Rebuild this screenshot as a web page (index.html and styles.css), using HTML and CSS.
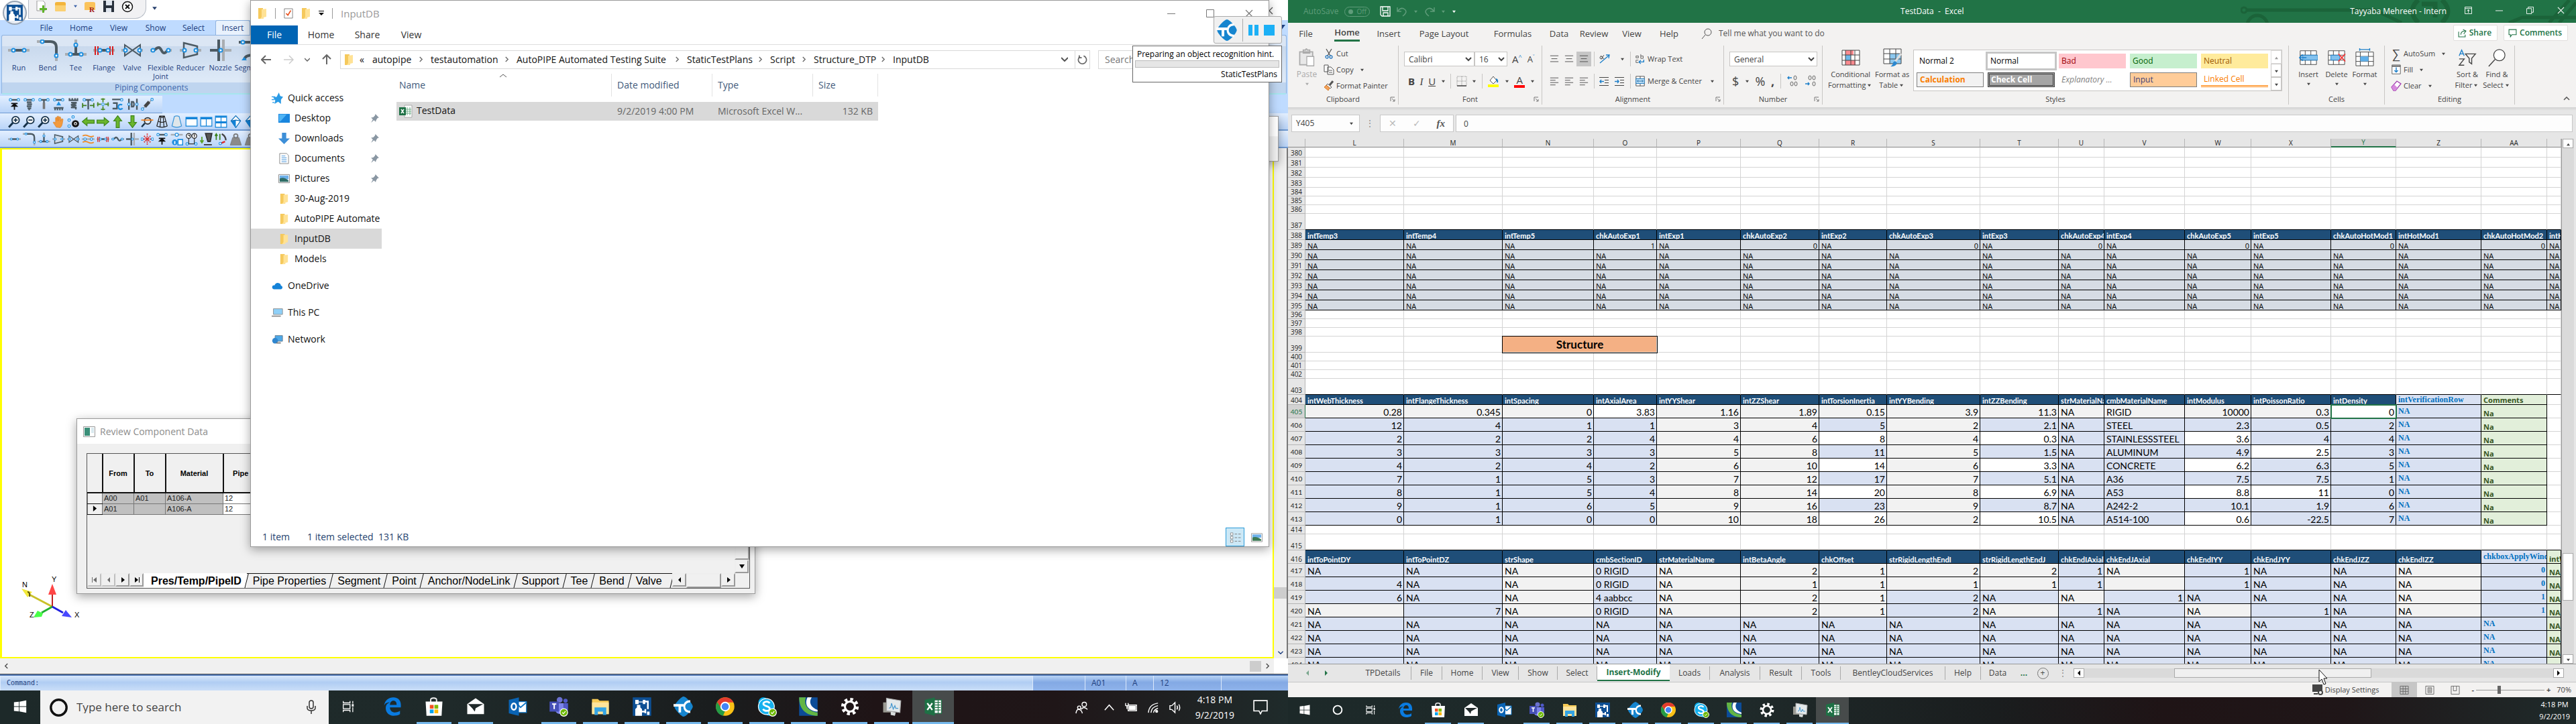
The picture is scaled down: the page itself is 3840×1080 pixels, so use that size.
FILE: index.html
```html
<!DOCTYPE html>
<html lang="en">
<head>
<meta charset="utf-8">
<title>Desktop</title>
<link rel="stylesheet" href="styles.css">
</head>
<body>
<svg class="defs" aria-hidden="true">
  <!-- general -->
  <symbol id="folder" viewBox="0 0 14 18"><path d="M1 1h7v16H1z" fill="#f5c95c"/><path d="M6 3l7-1v12l-4 1v2H4l2-3z" fill="#ffe295"/></symbol>
  <symbol id="down" viewBox="0 0 8 6"><path d="M1 1h6L4 5z" fill="currentColor"/></symbol>
  <symbol id="chev" viewBox="0 0 8 10"><path d="M2 1l4 4-4 4" fill="none" stroke="currentColor" stroke-width="1.5"/></symbol>
  <symbol id="pin" viewBox="0 0 14 14"><path d="M8 1l5 5-2 .5-2 3-.5 2.500L6 9.500 2 13l2.500-4.500L2 6l3-.5L7.500 3z" fill="#8a97a3"/></symbol>
  <symbol id="launch" viewBox="0 0 8 8"><path d="M1 7V1h6M3 3l4 4M7 4v3H4" fill="none" stroke="#777"/></symbol>
  <symbol id="min" viewBox="0 0 12 12"><path d="M0 6.500h12" stroke="currentColor" fill="none"/></symbol>
  <symbol id="max" viewBox="0 0 12 12"><path d="M.5.5h11v11H.5z" stroke="currentColor" fill="none"/></symbol>
  <symbol id="close" viewBox="0 0 12 12"><path d="M1 1l10 10M11 1L1 11" stroke="currentColor" fill="none" stroke-width="1.200"/></symbol>
  <!-- task bar -->
  <symbol id="t-start" viewBox="0 0 24 24"><path d="M2 5l8-1v7.500H2zM11 4l11-2v9.500H11zM2 12.500h8V20l-8-1zM11 12.500h11V22l-11-2z" fill="#fff"/></symbol>
  <symbol id="t-cortana" viewBox="0 0 24 24"><circle cx="12" cy="12" r="8.500" fill="none" stroke="currentColor" stroke-width="2.500"/></symbol>
  <symbol id="t-view" viewBox="0 0 24 24"><path d="M4 3v3h11V3M4 21v-3h11v3M4 8.500h11v7H4zM19.500 3v4M19.500 13v8" fill="none" stroke="#fff" stroke-width="1.400"/><path d="M18 8h3v4h-3z" fill="#fff"/></symbol>
  <symbol id="t-edge" viewBox="0 0 24 24"><path d="M2 11C3 4 8 1 13 1c6 0 10 4 9 12H9c0 4 3 6 6 6 2 0 5-1 6-2v4c-2 1.500-5 2-8 2-5 0-9-4-9-9 0-4 2-6 5-7-5 0-6 2-7 4zm7-1h8c0-3-1-5-4-5-2 0-4 2-4 5z" fill="#0a7be0"/></symbol>
  <symbol id="t-store" viewBox="0 0 24 24"><path d="M8 7V4c0-3 7-3 7 0v3" fill="none" stroke="#eee" stroke-width="1.500"/><path d="M2 6h20l-1 17H3z" fill="#fff"/><path d="M7 10h4.500v4.500H7z" fill="#f25022"/><path d="M12.500 10H17v4.500h-4.500z" fill="#7fba00"/><path d="M7 15.500h4.500V20H7z" fill="#00a4ef"/><path d="M12.500 15.500H17V20h-4.500z" fill="#ffb900"/></symbol>
  <symbol id="t-mail" viewBox="0 0 24 24"><path d="M2 9l10-7 10 7v12H2z" fill="#fff"/><path d="M3 9h18l-9 5-1 4-3-4z" fill="#20292a"/></symbol>
  <symbol id="t-outlook" viewBox="0 0 24 24"><path d="M11 6h12v13H11z" fill="#fff" stroke="#1177c8"/><path d="M11 8l5 5 7-6" fill="none" stroke="#1177c8" stroke-width="1.500"/><path d="M2 4l12-3v22L2 20z" fill="#0a64b4"/><ellipse cx="8" cy="12" rx="2.800" ry="3.800" fill="none" stroke="#fff" stroke-width="2"/></symbol>
  <symbol id="t-teams" viewBox="0 0 24 24"><circle cx="13" cy="4" r="3.500" fill="#6a70cf"/><circle cx="20" cy="5" r="2.500" fill="#5059c9"/><path d="M8 8h10v9c0 5-9 5-10 0z" fill="#7b83eb"/><path d="M18 8h5v7c0 4-5 4-5 0z" fill="#5059c9"/><path d="M1 6h11v12H1z" fill="#4650b8"/><path d="M4 9h5M6.500 9v6" stroke="#fff" stroke-width="1.600"/><circle cx="18" cy="19" r="4.500" fill="#6bb700" stroke="#fff"/><path d="M16 19l1.500 1.500 2.500-3" fill="none" stroke="#fff"/></symbol>
  <symbol id="t-explorer" viewBox="0 0 24 24"><path d="M2 3h7l2 2h11v16H2z" fill="#f7ca55"/><path d="M2 7h20v14H2z" fill="#ffe49b"/><path d="M5 13h14v9h-4v-4H9v4H5z" fill="#35a4e4"/></symbol>
  <symbol id="t-pipe" viewBox="0 0 24 24"><path d="M1 1h22v22H1z" fill="#0d4f94"/><path d="M4 4h4v2h5V4h3v5h-3V7H8v2H4zM16 5h4v10h-2V7h-2zM6 10h4v3l2 2v8H4v-8l2-2zM12 17h3v-2h2v5h-2v-1h-3zM18 18h3v4h-3z" fill="#fff"/></symbol>
  <symbol id="t-tc" viewBox="0 0 24 24"><path d="M12 0c3 0 11 9 11 12S15 24 12 24 1 15 1 12 9 0 12 0z" fill="#1685cf"/><path d="M0 9h12v3H9v7H6v-7H0zM20 7c-8 0-8 10 0 10v2.500C9 20 9 4 20 4.500z" fill="#fff"/></symbol>
  <symbol id="t-chrome" viewBox="0 0 24 24"><circle cx="12" cy="12" r="11" fill="#fbc116"/><path d="M12 1a11 11 0 0 1 10 6H12L7 14 2.500 6.500A11 11 0 0 1 12 1z" fill="#e33b2e"/><path d="M2.500 6.500L8 15l4 2-2.500 6A11 11 0 0 1 2.500 6.500z" fill="#259b46"/><circle cx="12" cy="12" r="5" fill="#4285f4" stroke="#fff" stroke-width="1.500"/></symbol>
  <symbol id="t-skype" viewBox="0 0 24 24"><circle cx="8" cy="7" r="6" fill="#00aff0"/><circle cx="15" cy="17" r="6" fill="#00aff0"/><circle cx="11.500" cy="12" r="9.500" fill="#16b1ef" stroke="#fff" stroke-width="1"/><path d="M15.500 8c-2-3-8-2-7.500 1s7.500 2 7.500 5.500-6 3.500-8 .5" fill="none" stroke="#fff" stroke-width="2.200"/><circle cx="19" cy="19" r="4.500" fill="#6bb700" stroke="#fff"/><path d="M17 19l1.500 1.500 2.500-3" fill="none" stroke="#fff"/></symbol>
  <symbol id="t-swirl" viewBox="0 0 24 24"><path d="M1 1h22v22H1z" fill="#0c4c98"/><path d="M1 1h8c-3 8 2 17 14 18v4C10 23 1 16 1 1z" fill="#63b544"/><path d="M11 1h5c-4 6-1 12 7 15v2C11 17 7 9 11 1z" fill="#fff"/></symbol>
  <symbol id="t-gear" viewBox="0 0 24 24"><circle cx="12" cy="12" r="8.500" fill="none" stroke="#fff" stroke-width="4" stroke-dasharray="3.340 3.340"/><circle cx="12" cy="12" r="6" fill="none" stroke="#fff" stroke-width="2.500"/></symbol>
  <symbol id="t-monitor" viewBox="0 0 24 24"><path d="M2 7h9v12H2z" fill="#9a9a92"/><path d="M6 2l17 3-1 14-16-2z" fill="#e3e8ea" stroke="#aaa"/><path d="M9 14l2-1 1-5 2 7 2-4 1 3h3" fill="none" stroke="#4a9ad0"/><path d="M11 18l6 1-1 4-5-1z" fill="#d8dcdc"/></symbol>
  <symbol id="t-excel" viewBox="0 0 24 24"><path d="M13 4h9v16h-9z" fill="#fff" stroke="#1e7145"/><path d="M14 7h7M14 10h7M14 13h7M14 16h7M18 4v16" stroke="#1e7145"/><path d="M2 4l12-3v22L2 20z" fill="#1e7145"/><path d="M5 8l6 8M11 8l-6 8" stroke="#fff" stroke-width="1.800"/></symbol>
  <!-- pipe tools -->
  <symbol id="p-run" viewBox="0 0 32 32"><path class="q" d="M0 16h32"/><path class="k" d="M8 16h16"/><circle class="n" cx="8" cy="16" r="2.500"/><circle class="n" cx="24" cy="16" r="2.500"/></symbol>
  <symbol id="p-bend" viewBox="0 0 32 32"><path class="q" d="M0 3h8M29 24v8"/><path class="k" d="M8 3h12q9 0 9 9v12"/><circle class="n" cx="8" cy="3" r="2.500"/><circle class="n" cx="29" cy="24" r="2.500"/></symbol>
  <symbol id="p-tee" viewBox="0 0 32 32"><path class="q" d="M0 22h32M16 0v10"/><path class="k" d="M8 22h16M16 8v14"/><circle class="n" cx="8" cy="22" r="2.500"/><circle class="n" cx="24" cy="22" r="2.500"/><circle class="n" cx="16" cy="8" r="2.500"/></symbol>
  <symbol id="p-flange" viewBox="0 0 32 32"><path class="q" d="M0 16h32"/><path class="k" d="M10 16h13"/><path d="M3 10v13M7 10v13M25 10v13M29 10v13" stroke="#d81e1e" stroke-width="2"/><circle class="n" cx="10" cy="16" r="2.500"/><circle class="n" cx="22" cy="16" r="2.500"/></symbol>
  <symbol id="p-valve" viewBox="0 0 32 32"><path class="q" d="M0 16h4M28 16h4"/><path d="M5 8l23 16V8L5 24z" fill="none" stroke="#4c5a63" stroke-width="2"/><circle class="n" cx="6" cy="16" r="2.500"/><circle class="n" cx="27" cy="16" r="2.500"/></symbol>
  <symbol id="p-flex" viewBox="0 0 32 32"><path class="q" d="M0 16h4M28 16h4"/><path class="k" d="M4 16c6-1 5-5 9-4s4 9 8 8 3-4 6-4"/><circle class="n" cx="4" cy="16" r="2.500"/><circle class="n" cx="27" cy="16" r="2.500"/></symbol>
  <symbol id="p-red" viewBox="0 0 32 32"><path class="q" d="M0 16h32"/><path d="M6 5l20 5v12L6 27z" fill="#cfdcec" stroke="#4c5a63" stroke-width="2.500"/><circle class="n" cx="7" cy="16" r="2.500"/><circle class="n" cx="24" cy="16" r="2.500"/></symbol>
  <symbol id="p-noz" viewBox="0 0 32 32"><path class="q" d="M16 16h16M20 0v32"/><path class="k" d="M0 16h14M13 0v32"/><circle class="n" cx="16" cy="16" r="2.500"/></symbol>
  <symbol id="p-seg" viewBox="0 0 32 32"><path class="k" d="M0 4h32M8 31q0-8 14-8"/><circle class="n" cx="6" cy="4" r="2.500"/><path d="M4 31l4-5 4 5z" fill="#1e8fe0"/></symbol>
  <symbol id="p-anchor" viewBox="0 0 32 32"><path class="k" d="M4 5h24"/><circle class="n" cx="6" cy="5" r="3"/><circle class="n" cx="26" cy="5" r="3"/><path d="M8 14h16M16 30V16M10 21l6-6 6 6z" stroke="#111" stroke-width="3"/></symbol>
  <symbol id="p-spring" viewBox="0 0 32 32"><path class="k" d="M4 5h24M10 11h12M11 16h12M10 21h12M12 26h9M16 26v5"/><circle class="n" cx="6" cy="5" r="3"/><circle class="n" cx="26" cy="5" r="3"/></symbol>
  <symbol id="p-rod" viewBox="0 0 32 32"><path class="k" d="M4 5h24M16 6v18"/><path d="M13 12h6v16h-6z" fill="#777"/><circle class="n" cx="6" cy="5" r="3"/><circle class="n" cx="26" cy="5" r="3"/></symbol>
  <symbol id="p-stop" viewBox="0 0 32 32"><path class="k" d="M4 5h24M4 25h24M7 25v6M13 25v6M19 25v6M25 25v6"/><path d="M10 19l6-10 6 10z" fill="#1e8fe0"/><circle class="n" cx="6" cy="5" r="3"/><circle class="n" cx="26" cy="5" r="3"/></symbol>
  <symbol id="p-coil" viewBox="0 0 32 32"><path class="k" d="M4 6h24M6 6V1M13 6V1M20 6V1M26 6V1M10 12h14l-14 6h13l-13 6h12v5"/></symbol>
  <symbol id="p-guide" viewBox="0 0 32 32"><path class="k" d="M4 5h24M16 5v24"/><path d="M2 19h10M20 19h10M2 13v12M30 13v12" stroke="#3f7f1f" stroke-width="3"/><circle class="n" cx="6" cy="5" r="3"/><circle class="n" cx="26" cy="5" r="3"/></symbol>
  <symbol id="p-cross" viewBox="0 0 32 32"><path d="M1 16h10M21 16h10M16 1v10M16 21v10M3 11v10M29 11v10M11 3h10M11 29h10" stroke="#4d8a28" stroke-width="3"/><circle class="n" cx="16" cy="16" r="3"/></symbol>
  <symbol id="p-rot" viewBox="0 0 32 32"><path class="k" d="M2 4h26M4 13h10v14H3"/><path d="M27 18a6 6 0 1 0 1 8" fill="none" stroke="#1e8fe0" stroke-width="4"/><circle class="n" cx="26" cy="5" r="3"/></symbol>
  <symbol id="p-damp" viewBox="0 0 32 32"><path class="k" d="M7 2v28M27 2v28M14 10v12h4q4-6 0-12z"/><circle class="n" cx="7" cy="16" r="3"/><circle class="n" cx="27" cy="16" r="3"/></symbol>
  <symbol id="p-link" viewBox="0 0 32 32"><path d="M4 28L28 4" stroke="#888" stroke-width="2"/><path d="M10 22l11-12" stroke="#444" stroke-width="8"/><circle class="n" cx="4" cy="28" r="3"/><circle class="n" cx="28" cy="4" r="3"/></symbol>
  <symbol id="p-zoom" viewBox="0 0 32 32"><path d="M2 30l10-11" stroke="#16324a" stroke-width="5"/><circle cx="19" cy="12" r="9" fill="#fff" stroke="#16324a" stroke-width="3"/><path d="M14 12h10M19 7v10" stroke="#16324a" stroke-width="3"/></symbol>
  <symbol id="p-zoomout" viewBox="0 0 32 32"><path d="M2 30l10-11" stroke="#16324a" stroke-width="5"/><circle cx="19" cy="12" r="9" fill="#fff" stroke="#16324a" stroke-width="3"/><path d="M14 12h10" stroke="#16324a" stroke-width="3"/></symbol>
  <symbol id="p-hand" viewBox="0 0 32 32"><path d="M10 30L2 18q2-3 6 1V6q3-2 4 0v8V3q3-2 4 0v11l1-10q3-1 4 1v10l2-6q3-1 4 1l-2 12q-1 6-5 9z" fill="#f29a3e" stroke="#d9791c"/></symbol>
  <symbol id="p-eye" viewBox="0 0 32 32"><circle class="n" cx="5" cy="12" r="3"/><circle class="n" cx="15" cy="4" r="3"/><circle class="n" cx="5" cy="27" r="3"/><circle cx="21" cy="21" r="9" fill="#111"/><circle cx="21" cy="21" r="3" fill="none" stroke="#fff" stroke-width="2"/></symbol>
  <symbol id="p-left" viewBox="0 0 32 32"><path d="M1 16L13 6v6h18v8H13v6z" fill="#6ab52d" stroke="#3f861a" stroke-width="2"/></symbol>
  <symbol id="p-right" viewBox="0 0 32 32"><path d="M31 16L19 6v6H1v8h18v6z" fill="#6ab52d" stroke="#3f861a" stroke-width="2"/></symbol>
  <symbol id="p-up" viewBox="0 0 32 32"><path d="M16 1L6 14h6v17h8V14h6z" fill="#6ab52d" stroke="#3f861a" stroke-width="2"/></symbol>
  <symbol id="p-dn" viewBox="0 0 32 32"><path d="M16 31L6 18h6V1h8v17h6z" fill="#6ab52d" stroke="#3f861a" stroke-width="2"/></symbol>
  <symbol id="p-find" viewBox="0 0 32 32"><path d="M2 29l8-9" stroke="#16324a" stroke-width="4"/><circle cx="17" cy="14" r="8" fill="#dce9f8" stroke="#333" stroke-width="3"/><path d="M1 12h30" stroke="#f08020" stroke-width="3"/></symbol>
  <symbol id="p-wire" viewBox="0 0 32 32"><path d="M10 2h12l7 25q-13 6-26 0zM10 3q6 4 12 0M7 15q9 5 18 0M13 4l-2 25M19 4l2 25" fill="none" stroke="#222" stroke-width="2"/></symbol>
  <symbol id="p-cone" viewBox="0 0 32 32"><path d="M10 3q6-3 12 0l6 24q-12 6-24 0z" fill="#dfe6ea" stroke="#3c95d8" stroke-width="2"/></symbol>
  <symbol id="p-win1" viewBox="0 0 32 32"><path d="M2 5h28v22H2z" fill="#fff" stroke="#0f82d8" stroke-width="2"/><path d="M2 5h28v5H2z" fill="#0f82d8"/></symbol>
  <symbol id="p-win2" viewBox="0 0 32 32"><path d="M2 5h28v22H2zM16 5v22" fill="#fff" stroke="#0f82d8" stroke-width="2"/><path d="M2 5h28v5H2z" fill="#0f82d8"/></symbol>
  <symbol id="p-win4" viewBox="0 0 32 32"><path d="M2 2h28v28H2zM16 2v28M2 16h28" fill="#fff" stroke="#0f82d8" stroke-width="2"/><path d="M2 2h28v4H2zM2 16h28v4H2z" fill="#0f82d8"/></symbol>
  <symbol id="p-cube" viewBox="0 0 32 32"><path d="M16 1l12 13-12 17L4 14z" fill="#fff" stroke="#0f6fb8" stroke-width="2"/><path d="M16 12v19L4 14z" fill="#0f82d8"/><path d="M4 14l12-2 12 2" fill="none" stroke="#0f6fb8" stroke-width="2"/></symbol>
  <symbol id="p-bellow" viewBox="0 0 32 32"><path class="q" d="M0 16h32"/><path d="M2 8q7-4 14 0t14 0M2 24q7-4 14 0t14 0" fill="none" stroke="#f08a24" stroke-width="3"/><circle class="n" cx="8" cy="16" r="3"/><circle class="n" cx="24" cy="16" r="3"/></symbol>
  <symbol id="p-star" viewBox="0 0 32 32"><path d="M8 8l16 16M24 8L8 24M16 2v28M2 16h28" stroke="#dc2a2a" stroke-width="3" stroke-dasharray="3 2"/><circle class="n" cx="3" cy="16" r="3"/><circle class="n" cx="29" cy="16" r="3"/></symbol>
  <symbol id="p-info" viewBox="0 0 32 32"><path class="q" d="M1 5h30"/><circle class="n" cx="16" cy="5" r="4"/><circle cx="11" cy="24" r="7" fill="#1e8fe0"/><path d="M19 17h12v14H19z" fill="#fff" stroke="#1e8fe0" stroke-width="3"/><path d="M11 21v7M21 24h8" stroke="#fff" stroke-width="3"/></symbol>
  <symbol id="p-pt" viewBox="0 0 32 32"><circle cx="9" cy="8" r="6" fill="#fff" stroke="#222" stroke-width="2"/><circle cx="23" cy="8" r="6" fill="#fff" stroke="#222" stroke-width="2"/><path d="M9 14v14M23 14v14M4 28h24M7 6h4v4M21 5h4M23 5v6" fill="none" stroke="#333" stroke-width="2"/><circle class="n" cx="5" cy="28" r="3"/><circle class="n" cx="27" cy="28" r="3"/></symbol>
  <symbol id="p-load" viewBox="0 0 32 32"><path d="M14 2h16l-4 20h-6zM10 30h20" fill="#555" stroke="#333" stroke-width="3"/><path d="M5 10v14M1 19l4 6 4-6" fill="none" stroke="#5aa128" stroke-width="3"/></symbol>
  <symbol id="p-disp" viewBox="0 0 32 32"><path d="M4 18V3M1 8l3-5 3 5M13 18V3" fill="none" stroke="#3c8420" stroke-width="3"/><path d="M18 3q10 6 10 16" fill="none" stroke="#444" stroke-width="4"/><path d="M14 27l12-5" stroke="#dc2a2a" stroke-width="4"/><circle class="n" cx="14" cy="27" r="3"/></symbol>
  <symbol id="p-weight" viewBox="0 0 32 32"><path d="M8 12h16l6 19H2z" fill="#8b8b8b" stroke="#666"/><circle cx="16" cy="8" r="5" fill="none" stroke="#777" stroke-width="3"/></symbol>
  <!-- office tools -->
  <symbol id="x-paste" viewBox="0 0 28 32"><path d="M2 6h22v22H2zM8 6V3h4q1-4 3 0h4v5H8z" fill="#e8e8e8" stroke="#aaa" stroke-width="2"/><path d="M14 14h12v16H14z" fill="#fff" stroke="#aaa" stroke-width="1.500"/></symbol>
  <symbol id="x-cut" viewBox="0 0 14 16"><path d="M3 1l6 10M11 1L5 11" stroke="#555" stroke-width="1.300" fill="none"/><circle cx="4" cy="13" r="2" fill="none" stroke="#2a7ac0" stroke-width="1.300"/><circle cx="10" cy="13" r="2" fill="none" stroke="#2a7ac0" stroke-width="1.300"/></symbol>
  <symbol id="x-copy" viewBox="0 0 16 16"><path d="M1 1h6v10H1zM6 4h5l4 4v7H6z" fill="#fff" stroke="#555"/><path d="M8 9h5M8 12h5" stroke="#555"/></symbol>
  <symbol id="x-brush" viewBox="0 0 16 16"><path d="M14 1l-5 6" stroke="#555" stroke-width="3"/><path d="M6 5l6 5-2 2-6-5z" fill="#fff" stroke="#555"/><path d="M4 7l5 4-2 4-6-5z" fill="#f3a35c" stroke="#d87a26"/></symbol>
  <symbol id="x-top" viewBox="0 0 14 16"><path d="M0 2.500h14M2 7.500h10M0 12.500h14" stroke="#444"/></symbol>
  <symbol id="x-lines" viewBox="0 0 14 16"><path d="M0 2.500h14M0 6.500h9M0 10.500h14M0 14.500h9" stroke="#444"/></symbol>
  <symbol id="x-indent" viewBox="0 0 14 16"><path d="M0 2.500h14M8 6.500h6M8 10.500h6M0 14.500h14" stroke="#444"/><path d="M7 8.500H1M3 6L1 8.500 3 11" fill="none" stroke="#1d7fc9" stroke-width="1.400"/></symbol>
  <symbol id="x-indent2" viewBox="0 0 14 16"><path d="M0 2.500h14M8 6.500h6M8 10.500h6M0 14.500h14" stroke="#444"/><path d="M0 8.500h6M4 6l2 2.500L4 11" fill="none" stroke="#1d7fc9" stroke-width="1.400"/></symbol>
  <symbol id="x-border" viewBox="0 0 16 16"><path d="M1 1h14v14H1zM8 1v14M1 8h14" fill="none" stroke="#888" stroke-dasharray="1 1"/><path d="M1 15h14" stroke="#444" stroke-width="1.500"/></symbol>
  <symbol id="x-fill" viewBox="0 0 16 18"><path d="M3 8l5-6 5 6-5 5z" fill="#fff" stroke="#555"/><path d="M12 6q3 1 2 5" stroke="#1d7fc9" stroke-width="2" fill="none"/><path d="M0 14h16v4H0z" fill="#ff0"/></symbol>
  <symbol id="x-orient" viewBox="0 0 18 16"><path d="M2 14L15 3M11 2l5 0-1 5" stroke="#1d7fc9" fill="none" stroke-width="1.300"/><path d="M3 3l5 5M8 2L4 8" stroke="#555"/><circle cx="4" cy="6" r="2" fill="none" stroke="#555"/></symbol>
  <symbol id="x-wrap" viewBox="0 0 16 18"><path d="M1 7V4h4v3H1M9 1v7h4V4H9M5 11H1v4h4" fill="none" stroke="#555"/><path d="M14 10v4H7M9 11l-3 3 3 3" fill="none" stroke="#1d7fc9" stroke-width="1.500"/></symbol>
  <symbol id="x-merge" viewBox="0 0 16 18"><path d="M1 1h14v16H1zM1 5h14M1 13h14M8 1v4M8 13v4" fill="#fff" stroke="#444"/><path d="M1 5h14v8H1z" fill="#bfe0f7" stroke="#1d7fc9"/><path d="M3 9h10M5 7L3 9l2 2M11 7l2 2-2 2" fill="none" stroke="#14629e"/></symbol>
  <symbol id="x-dec" viewBox="0 0 18 18"><path d="M8 4H2M4 2L2 4l2 2" fill="none" stroke="#1d7fc9" stroke-width="1.400"/><ellipse cx="13" cy="4" rx="2" ry="3" fill="none" stroke="#666"/><ellipse cx="8" cy="13" rx="2" ry="3" fill="none" stroke="#666"/><ellipse cx="14" cy="13" rx="2" ry="3" fill="none" stroke="#666"/></symbol>
  <symbol id="x-dec2" viewBox="0 0 18 18"><path d="M1 13h6M5 11l2 2-2 2" fill="none" stroke="#1d7fc9" stroke-width="1.400"/><ellipse cx="8" cy="4" rx="2" ry="3" fill="none" stroke="#666"/><ellipse cx="14" cy="4" rx="2" ry="3" fill="none" stroke="#666"/><ellipse cx="14" cy="13" rx="2" ry="3" fill="none" stroke="#666"/></symbol>
  <symbol id="x-cond" viewBox="0 0 28 24"><path d="M1 1h26v22H1z" fill="#fff"/><path d="M6 1h12v7H6zM6 16h15v7H6z" fill="#fb8a8f"/><path d="M6 8h8v8H6z" fill="#6db8ea"/><path d="M1 1h26v22H1zM1 8h26M1 16h26M6 1v22M14 1v22M20 1v22" fill="none" stroke="#444"/></symbol>
  <symbol id="x-table" viewBox="0 0 28 28"><path d="M1 1h26v22H1z" fill="#fff"/><path d="M10 8h17v15H10z" fill="#8cc8f0"/><path d="M1 1h26v22H1zM1 8h26M1 16h26M10 1v22M19 1v22" fill="none" stroke="#444"/><path d="M27 8l-9 12" stroke="#ddd" stroke-width="3"/><path d="M18 19l3 3q-2 6-10 5 4-2 4-6z" fill="#2b88d0"/></symbol>
  <symbol id="x-ins" viewBox="0 0 30 24"><path d="M2 1h26v22H2zM2 8h26M2 16h26M10 1v22M19 1v22" fill="#fff" stroke="#444"/><path d="M6 8h24v8H6z" fill="#82c1ee" stroke="#1d7fc9"/><path d="M12 12H1M6 7l-5 5 5 5" fill="none" stroke="#1d7fc9" stroke-width="1.800"/></symbol>
  <symbol id="x-del" viewBox="0 0 30 24"><path d="M2 1h26v22H2zM2 8h26M2 16h26M10 1v22M19 1v22" fill="#fff" stroke="#444"/><path d="M6 8h14v8H6z" fill="#82c1ee" stroke="#1d7fc9"/><path d="M18 6l11 12M29 6L18 18" stroke="#f03a3a" stroke-width="1.800"/></symbol>
  <symbol id="x-fmt" viewBox="0 0 30 30"><path d="M7 2h16M7 0v4M23 0v4" stroke="#1d7fc9" stroke-width="1.500"/><path d="M1 6h28v22H1zM1 13h28M1 21h28M8 6v22M21 6v22" fill="#fff" stroke="#444"/><path d="M8 13h13v8H8z" fill="#60b0ea"/></symbol>
  <symbol id="x-fx" viewBox="0 0 16 18"><path d="M1 1h14v15H1z" fill="#fff" stroke="#555"/><path d="M1 3h14" stroke="#555" stroke-width="2"/><path d="M8 5v8M5 10l3 3 3-3" fill="none" stroke="#1d7fc9" stroke-width="1.600"/></symbol>
  <symbol id="x-erase" viewBox="0 0 16 16"><path d="M1 10L9 1l6 4-8 10H4z" fill="#fff" stroke="#a33fb0" stroke-width="1.300"/><path d="M1 10l4-4 5 5-3 4H4z" fill="#d78ade"/></symbol>
  <symbol id="x-sort" viewBox="0 0 30 28"><path d="M2 11L6 2l4 9M3 8h6" fill="none" stroke="#1d7fc9" stroke-width="1.500"/><path d="M2 16h8L2 26h8M12 8h16l-6 7v9l-4-3v-6z" fill="none" stroke="#444" stroke-width="1.500"/></symbol>
  <symbol id="x-find" viewBox="0 0 30 30"><circle cx="19" cy="11" r="9" fill="#fff" stroke="#444" stroke-width="1.300"/><path d="M12 18L2 29" stroke="#444" stroke-width="1.500"/></symbol>
  <symbol id="x-save" viewBox="0 0 16 16"><path d="M1 1h14v14H3l-2-2zM4 1v6h8V1M5 15v-5h7v5" fill="none" stroke="#fff" stroke-width="1.300"/></symbol>
  <symbol id="x-undo" viewBox="0 0 16 16"><path d="M1 2v6h6M2 7q5-6 10-2t-3 10" fill="none" stroke="currentColor" stroke-width="1.500"/></symbol>
  <symbol id="x-redo" viewBox="0 0 16 16"><path d="M15 2v6H9M14 7Q9 1 4 5t3 10" fill="none" stroke="currentColor" stroke-width="1.500"/></symbol>
</svg>

<main class="desktop">
<section class="monitor left">
  <div class="pipe">
    <header class="pipe-title">
      <div class="orb"><svg><use href="#t-pipe"/></svg></div>
      <div class="qat">
        <svg viewBox="0 0 18 18"><path d="M2 0h9l3 3v12H2z" fill="#fff" stroke="#999"/><path d="M10 7h3v4h4v3h-4v4h-3v-4H6v-3h4z" fill="#5fb32a"/></svg>
        <svg viewBox="0 0 18 18"><path d="M1 4q0-2 3-2h10q3 0 3 2v10q0 2-3 2H4q-3 0-3-2z" fill="#f3b53c"/><path d="M1 7h16v7q0 2-3 2H4q-3 0-3-2z" fill="#fbd173"/></svg>
        <svg class="tiny"><use href="#down"/></svg>
        <svg viewBox="0 0 18 18"><path d="M1 4q0-2 3-2h10q3 0 3 2v10H1z" fill="#fbc35a"/><text x="8" y="17" class="red-r">R</text></svg>
        <svg viewBox="0 0 18 18"><path d="M1 0h16v17H1z" fill="#29313c"/><path d="M5 0h9v7H5zM5 11h8v6H5z" fill="#dfe5ee"/></svg>
        <svg viewBox="0 0 18 18"><circle cx="9" cy="9" r="7.500" fill="#fff" stroke="#111" stroke-width="1.500"/><path d="M6 6l6 6M12 6l-6 6" stroke="#111" stroke-width="2"/></svg>
      </div>
      <svg class="qat-more"><use href="#down"/></svg>
      <svg class="under-close"><use href="#close"/></svg>
    </header>
    <nav class="pipe-tabs">
      <button>File</button><button>Home</button><button>View</button><button>Show</button><button>Select</button><button class="on">Insert</button>
      <svg class="tab-more"><use href="#down"/></svg>
    </nav>
    <section class="pipe-ribbon">
      <div class="pipe-buttons">
        <button><svg><use href="#p-run"/></svg>Run</button>
        <button><svg><use href="#p-bend"/></svg>Bend</button>
        <button><svg><use href="#p-tee"/></svg>Tee</button>
        <button><svg><use href="#p-flange"/></svg>Flange</button>
        <button><svg><use href="#p-valve"/></svg>Valve</button>
        <button><svg><use href="#p-flex"/></svg>Flexible Joint</button>
        <button><svg><use href="#p-red"/></svg>Reducer</button>
        <button><svg><use href="#p-noz"/></svg>Nozzle</button>
        <button><svg><use href="#p-seg"/></svg>Segment</button>
      </div>
      <p>Piping Components</p>
    </section>
    <div class="band short">
      <svg><use href="#p-anchor"/></svg><svg><use href="#p-spring"/></svg><svg><use href="#p-rod"/></svg><svg><use href="#p-stop"/></svg><svg><use href="#p-coil"/></svg><svg><use href="#p-guide"/></svg><svg><use href="#p-cross"/></svg><svg><use href="#p-rot"/></svg><svg><use href="#p-damp"/></svg><svg><use href="#p-link"/></svg>
    </div>
    <div class="band">
      <svg><use href="#p-zoom"/></svg><svg><use href="#p-zoomout"/></svg><svg><use href="#p-zoom"/></svg><svg><use href="#p-hand"/></svg><svg><use href="#p-eye"/></svg><svg><use href="#p-left"/></svg><svg><use href="#p-right"/></svg><svg><use href="#p-up"/></svg><svg><use href="#p-dn"/></svg><svg><use href="#p-find"/></svg><svg><use href="#p-wire"/></svg><svg><use href="#p-cone"/></svg><svg><use href="#p-win1"/></svg><svg><use href="#p-win2"/></svg><svg><use href="#p-win4"/></svg><svg><use href="#p-cube"/></svg><svg><use href="#p-cube"/></svg>
    </div>
    <div class="band">
      <svg><use href="#p-run"/></svg><svg><use href="#p-bend"/></svg><svg><use href="#p-tee"/></svg><svg><use href="#p-red"/></svg><svg><use href="#p-valve"/></svg><svg><use href="#p-bellow"/></svg><svg><use href="#p-flange"/></svg><svg><use href="#p-flex"/></svg><svg><use href="#p-noz"/></svg><svg><use href="#p-star"/></svg><svg><use href="#p-anchor"/></svg><svg><use href="#p-info"/></svg><svg><use href="#p-pt"/></svg><svg><use href="#p-load"/></svg><svg><use href="#p-disp"/></svg><svg><use href="#p-weight"/></svg><svg><use href="#p-weight"/></svg>
    </div>
    <div class="canvas-wrap">
      <div class="canvas">
        <svg class="axes" viewBox="0 0 100 70" aria-label="Axes">
          <path d="M52 49L16 30" stroke="#c9c12a" stroke-width="3"/><path d="M6 22l16 5-7 8z" fill="#f2e93a"/><path d="M15 27q4 0 3 7" fill="none" stroke="#554d10" stroke-width="2"/>
          <path d="M52 49V30" stroke="#c02020" stroke-width="2"/><path d="M52 15l6 16H46z" fill="#ff4646"/>
          <path d="M52 49L36 58" stroke="#1fb030" stroke-width="3"/><path d="M24 65l6-10 8 4-2 5z" fill="#48ff48"/>
          <path d="M52 49l16 9" stroke="#2020e0" stroke-width="3"/><path d="M81 65l-15-2 6-9z" fill="#4848ff"/>
          <text x="7" y="20">N</text><text x="51" y="12">Y</text><text x="18" y="65">Z</text><text x="85" y="65">X</text>
        </svg>
      </div>
      <div class="vbar"><i></i><svg><use href="#chev"/></svg></div>
      <div class="hbar"><svg class="back"><use href="#chev"/></svg><i></i><svg><use href="#chev"/></svg></div>
    </div>
    <footer class="pipe-status"><span class="cmd">Command:</span><span></span><span>A01</span><span>A</span><span>12</span><span></span></footer>
  </div>

  <div class="window behind"></div>

  <section class="window review">
    <h2><svg viewBox="0 0 18 16"><path d="M.5.5h17v15H.5z" fill="#fff" stroke="#999"/><path d="M2 2h8v12H2z" fill="#3b8f79"/><path d="M12 2h4v8h-4z" fill="#d9e9ef"/></svg>Review Component Data</h2>
    <div class="review-body">
      <div class="review-main">
        <table class="pipes">
          <thead><tr><th></th><th>From</th><th>To</th><th>Material</th><th>Pipe ID</th></tr></thead>
          <tbody>
            <tr><th></th><td>A00</td><td>A01</td><td>A106-A</td><td class="w">12</td></tr>
            <tr><th><svg viewBox="0 0 8 10"><path d="M1 0l6 5-6 5z"/></svg></th><td>A01</td><td></td><td>A106-A</td><td class="w">12</td></tr>
          </tbody>
        </table>
        <div class="review-scroll"><i></i><button aria-label="Scroll down"><svg viewBox="0 0 8 6"><path d="M0 0h8L4 6z"/></svg></button></div>
      </div>
      <div class="review-tabs">
        <button class="step dim" aria-label="First"><svg viewBox="0 0 8 8"><path d="M0 0h1v8H0zM7 0v8L2 4z"/></svg></button><button class="step dim" aria-label="Previous"><svg viewBox="0 0 8 8"><path d="M6 0v8L2 4z"/></svg></button><button class="step" aria-label="Next"><svg viewBox="0 0 8 8"><path d="M2 0v8l5-4z"/></svg></button><button class="step" aria-label="Last"><svg viewBox="0 0 8 8"><path d="M7 0h1v8H7zM1 0v8l5-4z"/></svg></button>
        <button class="tab on">Pres/Temp/PipeID</button><button class="tab">Pipe Properties</button><button class="tab">Segment</button><button class="tab">Point</button><button class="tab">Anchor/NodeLink</button><button class="tab">Support</button><button class="tab">Tee</button><button class="tab">Bend</button><button class="tab last">Valve</button>
        <button class="step" aria-label="Scroll left"><svg viewBox="0 0 8 8"><path d="M6 0v8L2 4z"/></svg></button><i class="track"></i><button class="step" aria-label="Scroll right"><svg viewBox="0 0 8 8"><path d="M2 0v8l5-4z"/></svg></button><i class="corner"></i>
      </div>
    </div>
  </section>

  <section class="window explorer">
    <header class="ex-title">
      <svg><use href="#folder"/></svg><i></i>
      <svg viewBox="0 0 16 18"><path d="M1 1h14v16H1z" fill="#fff" stroke="#777"/><path d="M4 9l3 3 5-8" fill="none" stroke="#e8501c" stroke-width="2"/></svg>
      <svg><use href="#folder"/></svg>
      <svg class="caret" viewBox="0 0 8 8"><path d="M0 0h8v1H0zM0 3h8L4 7z"/></svg><i></i>
      <span>InputDB</span>
      <div class="win-buttons"><button aria-label="Minimize"><svg><use href="#min"/></svg></button><button aria-label="Maximize"><svg><use href="#max"/></svg></button><button aria-label="Close"><svg><use href="#close"/></svg></button></div>
    </header>
    <nav class="ex-tabs"><button class="file">File</button><button>Home</button><button>Share</button><button>View</button></nav>
    <div class="ex-address">
      <div class="arrows">
        <svg viewBox="0 0 16 14"><path d="M15 7H1M7 1L1 7l6 6" fill="none" stroke="#666" stroke-width="2"/></svg>
        <svg viewBox="0 0 16 14"><path d="M1 7h14M9 1l6 6-6 6" fill="none" stroke="#ccc" stroke-width="1.500"/></svg>
        <svg class="mini" viewBox="0 0 8 6"><path d="M0 1l4 4 4-4" fill="none" stroke="#666" stroke-width="1.500"/></svg>
        <svg viewBox="0 0 14 16"><path d="M7 15V1M1 7l6-6 6 6" fill="none" stroke="#666" stroke-width="2"/></svg>
      </div>
      <div class="path">
        <svg><use href="#folder"/></svg><b>«</b>
        <a href="#">autopipe<svg><use href="#chev"/></svg></a><a href="#">testautomation<svg><use href="#chev"/></svg></a><a href="#">AutoPIPE Automated Testing Suite<svg><use href="#chev"/></svg></a><a href="#">StaticTestPlans<svg><use href="#chev"/></svg></a><a href="#">Script<svg><use href="#chev"/></svg></a><a href="#">Structure_DTP<svg><use href="#chev"/></svg></a><a href="#">InputDB</a>
        <svg class="mini open" viewBox="0 0 10 7"><path d="M0 1l5 5 5-5" fill="none" stroke="#555" stroke-width="2"/></svg>
        <button aria-label="Refresh"><svg viewBox="0 0 16 16"><path d="M4 3a6.500 6.500 0 1 0 6-1M3 1v4h4" fill="none" stroke="#666" stroke-width="1.800"/></svg></button>
      </div>
      <input type="search" aria-label="Search" placeholder="Search InputDB">
    </div>
    <div class="ex-main">
      <ul class="nav">
        <li class="root"><svg viewBox="0 0 16 16"><path d="M10 0l2 5 4 1-3 4 0 6-4-3-5 3 1-5-3-4 5-1z" fill="#2a9be6"/><path d="M0 6h5M0 10h4M1 14h3" stroke="#2a9be6"/></svg>Quick access</li>
        <li><svg viewBox="0 0 18 14"><path d="M0 0h18v14H0z" fill="#1a86de"/><path d="M1 1h12L3 12H1z" fill="#4fb4f5"/></svg>Desktop<svg class="pin"><use href="#pin"/></svg></li>
        <li><svg viewBox="0 0 16 16"><path d="M5 0h6v8h5l-8 8-8-8h5z" fill="#3d8fd8"/></svg>Downloads<svg class="pin"><use href="#pin"/></svg></li>
        <li><svg viewBox="0 0 16 18"><path d="M1 1h11l3 3v13H1z" fill="#fff" stroke="#888"/><path d="M4 5h6M4 8h8M4 11h8M4 14h8" stroke="#3d8fd8"/></svg>Documents<svg class="pin"><use href="#pin"/></svg></li>
        <li><svg viewBox="0 0 18 14"><path d="M.5.5h17v13H.5z" fill="#fff" stroke="#888"/><path d="M2 2h14v6H2z" fill="#6db0ea"/><path d="M2 7q6-4 14 3v2H2z" fill="#2f6d66"/></svg>Pictures<svg class="pin"><use href="#pin"/></svg></li>
        <li><svg><use href="#folder"/></svg>30-Aug-2019</li>
        <li><svg><use href="#folder"/></svg>AutoPIPE Automate</li>
        <li class="on"><svg><use href="#folder"/></svg>InputDB</li>
        <li><svg><use href="#folder"/></svg>Models</li>
        <li class="root gap"><svg viewBox="0 0 20 14"><path d="M4 13q-4-1-3-5 1-3 4-2 2-5 7-4 4 1 4 4 3 1 3 4-1 3-3 3z" fill="#1583d8"/></svg>OneDrive</li>
        <li class="root gap"><svg viewBox="0 0 20 16"><path d="M3 1h16v10H3z" fill="#8fd0f8" stroke="#888"/><path d="M0 13h16v2H0z" fill="#888"/></svg>This PC</li>
        <li class="root gap"><svg viewBox="0 0 20 16"><path d="M6 1h13v10H6z" fill="#4da8e8" stroke="#678"/><circle cx="6" cy="10" r="5" fill="#2f86cf"/><path d="M8 14h8" stroke="#777" stroke-width="2"/></svg>Network</li>
      </ul>
      <table class="files">
        <thead><tr><th>Name<svg class="sort" viewBox="0 0 10 6"><path d="M0 5l5-4 5 4" fill="none" stroke="#555"/></svg></th><th>Date modified</th><th>Type</th><th>Size</th></tr></thead>
        <tbody><tr><td><svg viewBox="0 0 20 20"><path d="M8 1h11v18H8z" fill="#fff" stroke="#aaa"/><path d="M12 4v12M16 4v12M10 7h8M10 10h8M10 13h8" stroke="#6fae88"/><path d="M0 4h10v12H0z" fill="#1e7145"/><path d="M3 7l4 6M7 7l-4 6" stroke="#fff" stroke-width="1.500"/></svg>TestData</td><td>9/2/2019 4:00 PM</td><td>Microsoft Excel W...</td><td>132 KB</td></tr></tbody>
      </table>
    </div>
    <footer class="ex-status"><span>1 item</span><span>1 item selected&nbsp; 131 KB</span>
      <div class="views"><button class="on" aria-label="Details"><svg viewBox="0 0 18 18"><path d="M1 1h4v4H1zM1 7h4v4H1zM1 13h4v4H1z" fill="#fff" stroke="#888"/><path d="M8 3h4M14 3h4M8 9h4M14 9h4M8 15h4M14 15h4" stroke="#777"/></svg></button><button aria-label="Large icons"><svg viewBox="0 0 18 14"><path d="M.5.5h17v13H.5z" fill="#fff" stroke="#999"/><path d="M2 2h14v5H2z" fill="#6db0ea"/><path d="M2 7q6-3 14 3v2H2z" fill="#3c7a55"/></svg></button></div>
    </footer>
  </section>

  <div class="recorder"><svg class="logo"><use href="#t-tc"/></svg><i></i><svg viewBox="0 0 16 16"><path d="M0 0h6v16H0zM9 0h6v16H9z" fill="#1cb0f6"/></svg><svg viewBox="0 0 16 16"><path d="M0 0h16v16H0z" fill="#1cb0f6"/></svg></div>
  <div class="hint"><p>Preparing an object recognition hint.</p><i></i><p class="end">StaticTestPlans</p></div>

  <footer class="taskbar">
    <button class="start" aria-label="Start"><svg><use href="#t-start"/></svg></button>
    <label class="search"><svg class="ring"><use href="#t-cortana"/></svg><input type="text" placeholder="Type here to search" aria-label="Search Windows"><svg class="mic" viewBox="0 0 14 22"><rect x="4" y="1" width="6" height="12" rx="3" fill="none" stroke="#333" stroke-width="1.500"/><path d="M1 9v3q0 4 6 4t6-4V9M7 16v5" fill="none" stroke="#333" stroke-width="1.500"/></svg></label>
    <button class="view" aria-label="Task view"><svg><use href="#t-view"/></svg></button>
    <button><svg><use href="#t-edge"/></svg></button><button class="run"><svg><use href="#t-store"/></svg></button><button class="run"><svg><use href="#t-mail"/></svg></button><button><svg><use href="#t-outlook"/></svg></button><button class="run"><svg><use href="#t-teams"/></svg></button><button class="run"><svg><use href="#t-explorer"/></svg></button><button class="run"><svg><use href="#t-pipe"/></svg></button><button class="run"><svg><use href="#t-tc"/></svg></button><button class="run"><svg><use href="#t-chrome"/></svg></button><button class="run"><svg><use href="#t-skype"/></svg></button><button class="run"><svg><use href="#t-swirl"/></svg></button><button class="run"><svg><use href="#t-gear"/></svg></button><button class="run"><svg><use href="#t-monitor"/></svg></button><button class="run on"><svg><use href="#t-excel"/></svg></button>
    <div class="tray">
      <svg viewBox="0 0 20 20"><circle cx="14" cy="5" r="3.500"/><circle cx="6" cy="10" r="2.500"/><path d="M9 13q4-6 10 0M1 19q1-7 5-6t5 6"/></svg>
      <svg viewBox="0 0 20 20"><path d="M3 14l7-8 7 8"/></svg>
      <svg viewBox="0 0 20 20"><path d="M5 6h13v9H5zM1 3v4h4V3M3 7v5"/><path d="M7 8h9v5H7z" class="solid"/></svg>
      <svg viewBox="0 0 20 20"><path d="M2 18Q3 5 17 3M6 18Q7 9 17 7M10 18q1-5 7-7"/><circle cx="15" cy="16" r="1.500" class="solid"/></svg>
      <svg viewBox="0 0 20 20"><path d="M1 7h3l5-5v16l-5-5H1zM12 7q2 3 0 6M15 5q3 5 0 10"/></svg>
      <time>4:18 PM<br>9/2/2019</time>
      <svg viewBox="0 0 20 20"><path d="M1 1h18v14h-7l-2 4-2-4H1z"/></svg>
    </div>
  </footer>
</section>

<section class="monitor right">
  <header class="xl-title">
    <span class="faint">AutoSave</span><span class="toggle faint">Off</span>
    <svg class="ic16"><use href="#x-save"/></svg>
    <svg class="ic16 faint"><use href="#x-undo"/></svg><svg class="tiny faint"><use href="#down"/></svg>
    <svg class="ic16 faint"><use href="#x-redo"/></svg><svg class="tiny faint"><use href="#down"/></svg>
    <svg class="tiny"><use href="#down"/></svg>
    <h1>TestData &nbsp;-&nbsp; Excel</h1>
    <svg class="circuit" viewBox="0 0 500 34"><path d="M10 15h190l40 19M400 34l20-8h80M460 34l30-34M475 34l25-30" fill="none" stroke="#1b6339" stroke-width="5"/><circle cx="5" cy="15" r="4" fill="none" stroke="#1b6339" stroke-width="3"/><circle cx="25" cy="38" r="15" fill="none" stroke="#1b6339" stroke-width="5"/><path d="M265 0q-18 16 0 34M300 0q18 16 0 34M270 6h20v20" fill="none" stroke="#1b6339" stroke-width="7"/></svg>
    <span class="user">Tayyaba Mehreen - Intern</span>
    <div class="xl-win"><button aria-label="Ribbon options"><svg viewBox="0 0 12 12"><path d="M.5.5h11v11H.5zM.5 3h11M6 10V5M4 7l2-2 2 2" fill="none" stroke="#fff"/></svg></button><button aria-label="Minimize"><svg><use href="#min"/></svg></button><button aria-label="Restore"><svg viewBox="0 0 12 12"><path d="M.5 3h8v8.500h-8zM3 3V.5h8.500V9h-3" fill="none" stroke="#fff"/></svg></button><button aria-label="Close"><svg><use href="#close"/></svg></button></div>
  </header>
  <nav class="xl-tabs">
    <button>File</button><button class="on">Home</button><button>Insert</button><button>Page Layout</button><button>Formulas</button><button>Data</button><button>Review</button><button>View</button><button>Help</button>
    <label><svg viewBox="0 0 16 16"><circle cx="10" cy="6" r="5" fill="none" stroke="#555"/><path d="M6 10l-5 6" stroke="#555"/></svg><input type="text" placeholder="Tell me what you want to do" aria-label="Tell me"></label>
    <div class="share"><button><svg viewBox="0 0 12 12"><path d="M1 4v7h9V8M4 8q0-5 6-5M7 1l4 2-3 4" fill="none" stroke="#217346"/></svg>Share</button><button><svg viewBox="0 0 12 12"><path d="M1 1h10v7H5l-2 3V8H1z" fill="none" stroke="#217346"/></svg>Comments</button></div>
  </nav>
  <section class="xl-ribbon">
    <div class="grp clip"><div class="body">
      <button class="big off"><svg><use href="#x-paste"/></svg>Paste<svg class="tiny"><use href="#down"/></svg></button>
      <div class="stack"><button><svg><use href="#x-cut"/></svg>Cut</button><button><svg><use href="#x-copy"/></svg>Copy <svg class="tiny"><use href="#down"/></svg></button><button><svg><use href="#x-brush"/></svg>Format Painter</button></div>
    </div><p>Clipboard<svg><use href="#launch"/></svg></p></div>
    <div class="grp font"><div class="body rows">
      <div class="line"><select aria-label="Font"><option>Calibri</option></select><select aria-label="Font size" class="size"><option>16</option></select><button class="big-a">A<sup>^</sup></button><button class="small-a">A<sup>˅</sup></button></div>
      <div class="line tools"><button><b>B</b></button><button><i class="it">I</i></button><button><u>U</u></button><svg class="tiny"><use href="#down"/></svg><span class="bar"></span><svg class="ic16"><use href="#x-border"/></svg><svg class="tiny"><use href="#down"/></svg><span class="bar"></span><svg class="ic18"><use href="#x-fill"/></svg><svg class="tiny"><use href="#down"/></svg><button class="fc">A</button><svg class="tiny"><use href="#down"/></svg></div>
    </div><p>Font<svg><use href="#launch"/></svg></p></div>
    <div class="grp align"><div class="body rows">
      <div class="line"><span class="tri"><svg><use href="#x-top"/></svg><svg><use href="#x-top"/></svg><svg class="sel"><use href="#x-top"/></svg></span><span class="bar"></span><span class="pair"><svg class="ic18"><use href="#x-orient"/></svg><svg class="tiny"><use href="#down"/></svg></span><span class="bar"></span><button class="wide"><svg><use href="#x-wrap"/></svg>Wrap Text</button></div>
      <div class="line"><span class="tri"><svg><use href="#x-lines"/></svg><svg><use href="#x-lines"/></svg><svg><use href="#x-lines"/></svg></span><span class="bar"></span><span class="pair"><svg class="ic16"><use href="#x-indent"/></svg><svg class="ic16"><use href="#x-indent2"/></svg></span><span class="bar"></span><button class="wide"><svg><use href="#x-merge"/></svg>Merge &amp; Center</button><svg class="tiny"><use href="#down"/></svg></div>
    </div><p>Alignment<svg><use href="#launch"/></svg></p></div>
    <div class="grp number"><div class="body rows">
      <div class="line"><select aria-label="Number format"><option>General</option></select></div>
      <div class="line sym"><button>$</button><svg class="tiny"><use href="#down"/></svg><button>%</button><button><b>,</b></button><span class="bar"></span><svg class="ic18"><use href="#x-dec"/></svg><svg class="ic18"><use href="#x-dec2"/></svg></div>
    </div><p>Number<svg><use href="#launch"/></svg></p></div>
    <div class="grp styles"><div class="body">
      <button class="big"><svg><use href="#x-cond"/></svg>Conditional<span>Formatting<svg class="tiny"><use href="#down"/></svg></span></button>
      <button class="big"><svg><use href="#x-table"/></svg>Format as<span>Table<svg class="tiny"><use href="#down"/></svg></span></button>
      <div class="gallery"><div class="swatches">
        <button>Normal 2</button><button class="s-normal">Normal</button><button class="s-bad">Bad</button><button class="s-good">Good</button><button class="s-neutral">Neutral</button>
        <button class="s-calc">Calculation</button><button class="s-check">Check Cell</button><button class="s-expl">Explanatory ...</button><button class="s-input">Input</button><button class="s-link">Linked Cell</button>
      </div><div class="gscroll"><button class="dim" aria-label="Up"><svg class="tiny flip"><use href="#down"/></svg></button><button aria-label="Down"><svg class="tiny"><use href="#down"/></svg></button><button aria-label="More"><svg class="tiny"><use href="#down"/></svg></button></div></div>
    </div><p>Styles</p></div>
    <div class="grp cells"><div class="body">
      <button class="big"><svg><use href="#x-ins"/></svg>Insert<svg class="tiny"><use href="#down"/></svg></button><button class="big"><svg><use href="#x-del"/></svg>Delete<svg class="tiny"><use href="#down"/></svg></button><button class="big"><svg><use href="#x-fmt"/></svg>Format<svg class="tiny"><use href="#down"/></svg></button>
    </div><p>Cells</p></div>
    <div class="grp edit"><div class="body">
      <div class="stack"><button><span class="sigma">∑</span>AutoSum <svg class="tiny"><use href="#down"/></svg></button><button><svg><use href="#x-fx"/></svg>Fill<svg class="tiny"><use href="#down"/></svg></button><button><svg><use href="#x-erase"/></svg>Clear<svg class="tiny"><use href="#down"/></svg></button></div>
      <button class="big"><svg><use href="#x-sort"/></svg>Sort &amp;<span>Filter<svg class="tiny"><use href="#down"/></svg></span></button><button class="big"><svg><use href="#x-find"/></svg>Find &amp;<span>Select<svg class="tiny"><use href="#down"/></svg></span></button>
    </div><p>Editing</p></div>
    <button class="collapse" aria-label="Collapse"><svg viewBox="0 0 10 6"><path d="M1 5l4-4 4 4" fill="none" stroke="#555" stroke-width="1.500"/></svg></button>
  </section>
  <div class="xl-formula">
    <div class="namebox">Y405<svg class="tiny"><use href="#down"/></svg></div><span class="dots">⋮</span>
    <div class="fxbox"><span>✕</span><span>✓</span><i class="fx">fx</i></div>
    <input type="text" aria-label="Formula" value="0">
  </div>
  <div class="sheet-area">
    <div class="sheet-clip"><table class="sheet" id="sheet"></table></div>
    <div class="sheet-scroll"><button aria-label="Up"><svg class="tiny flip"><use href="#down"/></svg></button><i></i><button class="bottom" aria-label="Down"><svg class="tiny"><use href="#down"/></svg></button></div>
  </div>
  <nav class="sheet-tabs">
    <span class="steps"><svg class="dim" viewBox="0 0 6 8"><path d="M5 0v8L1 4z"/></svg><svg viewBox="0 0 6 8"><path d="M1 0v8l4-4z"/></svg></span>
    <button>TPDetails</button><button>File</button><button>Home</button><button>View</button><button>Show</button><button>Select</button><button class="on">Insert-Modify</button><button>Loads</button><button>Analysis</button><button>Result</button><button>Tools</button><button>BentleyCloudServices</button><button>Help</button><button>Data</button>
    <span class="more">...</span><span class="plus">+</span><span class="dots">⋮</span>
    <div class="hscroll"><button aria-label="Left"><svg viewBox="0 0 6 8"><path d="M5 0v8L1 4z"/></svg></button><i></i><button class="bottom" aria-label="Right"><svg viewBox="0 0 6 8"><path d="M1 0v8l4-4z"/></svg></button></div>
  </nav>
  <footer class="xl-status">
    <span class="display"><svg viewBox="0 0 16 16"><path d="M0 0h15v11H0z" fill="#444"/><path d="M2 14h6" stroke="#444" stroke-width="2"/><circle cx="12" cy="12" r="3" fill="#fff" stroke="#444" stroke-width="2"/></svg>Display Settings</span>
    <button class="on" aria-label="Normal"><svg viewBox="0 0 14 14"><path d="M.5.5h13v13H.5zM.5 5h13M.5 9h13M5 .5v13M9 .5v13" fill="none" stroke="#666"/></svg></button>
    <button aria-label="Page layout"><svg viewBox="0 0 14 14"><path d="M.5.5h13v13H.5zM4 3h6v8H4zM5 5h4M5 7h4M5 9h4" fill="none" stroke="#666"/></svg></button>
    <button aria-label="Page break"><svg viewBox="0 0 14 14"><path d="M.5.5h13v13H.5zM4 .5V8h5V.5" fill="none" stroke="#666"/></svg></button>
    <label class="zoom"><b>-</b><input type="range" min="0" max="100" value="33" aria-label="Zoom"><b>+</b><span>70%</span></label>
  </footer>
  <footer class="taskbar small">
    <button aria-label="Start"><svg><use href="#t-start"/></svg></button><button class="cort"><svg><use href="#t-cortana"/></svg></button><button class="view"><svg><use href="#t-view"/></svg></button>
    <button><svg><use href="#t-edge"/></svg></button><button class="run"><svg><use href="#t-store"/></svg></button><button class="run"><svg><use href="#t-mail"/></svg></button><button><svg><use href="#t-outlook"/></svg></button><button class="run"><svg><use href="#t-teams"/></svg></button><button class="run"><svg><use href="#t-explorer"/></svg></button><button class="run"><svg><use href="#t-pipe"/></svg></button><button class="run"><svg><use href="#t-tc"/></svg></button><button class="run"><svg><use href="#t-chrome"/></svg></button><button class="run"><svg><use href="#t-skype"/></svg></button><button class="run"><svg><use href="#t-swirl"/></svg></button><button class="run"><svg><use href="#t-gear"/></svg></button><button class="run"><svg><use href="#t-monitor"/></svg></button><button class="run on"><svg><use href="#t-excel"/></svg></button>
    <div class="tray"><time>4:18 PM<br>9/2/2019</time></div>
  </footer>
  <svg class="cursor" viewBox="0 0 14 24"><path d="M1 1v18l4-4 3 8 3-1-3-8h5z" fill="#fff" stroke="#111"/></svg>
</section>
</main>
<script src="sheet.js"></script>
</body>
</html>
```
FILE: sheet.js
```js
// Builds the worksheet grid: columns L to AB, rows 380 to 424.
const columns = [['L',147],['M',147],['N',136],['O',94],['P',125],['Q',117],['R',101],['S',139],['T',117],['U',68],['V',120],['W',99],['X',119],['Y',97],['Z',127],['AA',98],['',21]];

const na = (n) => Array(n).fill('NA').join('|');
const row = {};

row[388] = { kind: 'head', text: 'intTemp3|intTemp4|intTemp5|chkAutoExp1|intExp1|chkAutoExp2|intExp2|chkAutoExp3|intExp3|chkAutoExp4|intExp4|chkAutoExp5|intExp5|chkAutoHotMod1|intHotMod1|chkAutoHotMod2|intHotMod2', fill: 'hhhhhhhhhhhhhhhhh' };
row[389] = { kind: 'small', text: 'NA|NA|NA|1|NA|0|NA|0|NA|0|NA|0|NA|0|NA|0|NA', fill: 'sssssssssssssssss' };
for (let r = 390; r < 396; r++) row[r] = { kind: 'small', text: na(17), fill: 'sssssssssssssssss' };

row[404] = { kind: 'head', text: 'intWebThickness|intFlangeThickness|intSpacing|intAxialArea|intYYShear|intZZShear|intTorsionInertia|intYYBending|intZZBending|strMaterialName|cmbMaterialName|intModulus|intPoissonRatio|intDensity|intVerificationRow|Comments|', fill: 'hhhhhhhhhhhhhhve.' };
const structure = [
  ['0.28|0.345|0|3.83|1.16|1.89|0.15|3.9|11.3|NA|RIGID|10000|0.3|0', 'gggwgggggggggx'],
  ['12|4|1|1|3|4|5|2|2.1|NA|STEEL|2.3|0.5|2', 'bbbbggbgbbbbbb'],
  ['2|2|2|4|4|6|8|4|0.3|NA|STAINLESSSTEEL|3.6|4|4', 'bbbbggwgwbbwbb'],
  ['3|3|3|3|5|8|11|5|1.5|NA|ALUMINUM|4.9|2.5|3', 'bbbbggbgbbbbwb'],
  ['4|2|4|2|6|10|14|6|3.3|NA|CONCRETE|6.2|6.3|5', 'bbbbggwgwbbwbb'],
  ['7|1|5|3|7|12|17|7|5.1|NA|A36|7.5|7.5|1', 'bbbbggbgbbbbbb'],
  ['8|1|5|4|8|14|20|8|6.9|NA|A53|8.8|11|0', 'bbbbggwgwbbwwb'],
  ['9|1|6|5|9|16|23|9|8.7|NA|A242-2|10.1|1.9|6', 'bbbbggbgbbbbbb'],
  ['0|1|0|0|10|18|26|2|10.5|NA|A514-100|0.6|-22.5|7', 'bbbbggwgwbbwbb']
];
structure.forEach(([text, fill], i) => { row[405 + i] = { kind: 'big', text: text + '|NA|Na|', fill: fill + 've.' }; });

row[416] = { kind: 'head deep', text: 'intToPointDY|intToPointDZ|strShape|cmbSectionID|strMaterialName|intBetaAngle|chkOffset|strRigidLengthEndI|strRigidLengthEndJ|chkEndIAxial|chkEndJAxial|chkEndIYY|chkEndJYY|chkEndJZZ|chkEndIZZ|chkboxApplyWind|intW', fill: 'hhhhhhhhhhhhhhhve' };
row[417] = { kind: 'big', text: 'NA|NA|NA|0 RIGID|NA|2|1|2|2|1|NA|1|NA|NA|NA|0|NA', fill: 'bbgbgggggbgbbbgve' };
row[418] = { kind: 'big', text: '4|NA|NA|0 RIGID|NA|1|1|1|1|1||1|NA|NA|NA|0|NA', fill: 'bbgbgggggbgbbbgve' };
row[419] = { kind: 'big', text: '6|NA|NA|4 aabbcc|NA|2|1|2|NA|NA|1|NA|NA|NA|NA|1|NA', fill: 'bbgbgggbbgbbbbgve' };
row[420] = { kind: 'big', text: 'NA|7|NA|0 RIGID|NA|2|1|2|NA|1|NA|NA|1|NA|NA|1|NA', fill: 'gbgbgggbgbbgbbgve' };
for (let r = 421; r < 425; r++) row[r] = { kind: 'big', text: na(17), fill: 'bbbbbbbbbbbbbbbve' };

const tall = [387, 399, 403, 415];
const table = document.getElementById('sheet');
const cell = (tag, cls, text) => {
  const el = document.createElement(tag);
  if (cls) el.className = cls;
  el.textContent = text;
  return el;
};

const group = document.createElement('colgroup');
[['', 26], ...columns].forEach(([, w]) => {
  const c = document.createElement('col');
  c.style.width = w + 'px';
  group.append(c);
});
table.append(group);

const head = table.createTHead().insertRow();
head.append(cell('th', 'all', ''));
columns.forEach(([name]) => head.append(cell('th', name === 'Y' ? 'cur' : '', name)));

const body = table.createTBody();
for (let r = 380; r < 425; r++) {
  const tr = body.insertRow();
  const data = row[r];
  tr.className = data ? data.kind : tall.includes(r) ? 'tall' : r < 384 ? 'mid' : 'low';
  if ([387, 403, 415].includes(r)) tr.classList.add('edge');
  tr.append(cell('th', r === 405 ? 'cur' : '', r));
  if (r === 399) {
    tr.append(cell('td', '', ''), cell('td', '', ''));
    const label = cell('td', 'label', 'Structure');
    label.colSpan = 2;
    tr.append(label);
    for (let i = 0; i < 13; i++) tr.append(cell('td', '', ''));
    continue;
  }
  const texts = data ? data.text.split('|') : [];
  columns.forEach((_, i) => {
    const text = texts[i] || '';
    let cls = data && data.fill[i] !== '.' ? 'f-' + data.fill[i] : '';
    if (text && !isNaN(text)) cls += ' num';
    tr.append(cell('td', cls, text));
  });
}
```
FILE: styles.css
```css
* { box-sizing: border-box; }
body { margin: 0; height: 100vh; overflow: hidden; font: 14px/18px "Open Sans", "Noto Sans", sans-serif; color: #222; }
button, input, select { font: inherit; color: inherit; background: none; border: 0; padding: 0; margin: 0; min-width: 0; }
button { white-space: nowrap; }
ul { list-style: none; margin: 0; padding: 0; }
h1, h2, p { margin: 0; font-weight: normal; }
a { color: inherit; text-decoration: none; }
svg { width: 16px; height: 16px; flex: none; }
.defs { position: absolute; width: 0; height: 0; }
.desktop { display: grid; grid-template-columns: 1fr 1fr; height: 100%; }
.monitor { position: relative; display: flex; flex-direction: column; overflow: hidden; min-width: 0; }
.tiny { width: 7px; height: 5px; }
.flip { transform: scaleY(-1); }
.ic16 { width: 16px; height: 16px; }
.ic18 { width: 18px; height: 18px; }

/* pipe symbols */
.k { fill: none; stroke: #4c5a63; stroke-width: 4; }
.q { fill: none; stroke: #a9adb1; stroke-width: 4; }
.n { fill: #fff; stroke: #1e8fe0; stroke-width: 2; }

/* AutoPIPE */
.pipe { flex: 1; min-height: 0; display: flex; flex-direction: column; background: #bfdbff; color: #1e3f80; font-size: 12px; line-height: 13px; }
.pipe-title { flex: none; height: 30px; display: flex; align-items: flex-start; background: #fff; padding-left: 42px; position: relative; }
.orb { position: absolute; left: 4px; top: 1px; width: 36px; height: 36px; border-radius: 50%; border: 2px solid #9aa6b5; background: #e9eef5; display: grid; place-items: center; z-index: 1; }
.orb svg { width: 26px; height: 26px; }
.qat { width: 176px; height: 28px; padding: 0 18px 8px 10px; display: flex; align-items: center; justify-content: space-between; border: 1px solid #b6bcc5; border-top: 0; border-radius: 0 0 16px 0; background: #f1f1f3; }
.qat svg { width: 18px; height: 18px; }
.qat .tiny { width: 7px; height: 5px; color: #3b62a8; }
.qat-more { width: 9px; height: 7px; margin: 9px 8px; color: #27406e; }
.under-close { width: 12px; height: 12px; margin: 10px 22px 0 auto; color: #555; }
.red-r { font: bold 11px "Liberation Serif", serif; fill: #a01818; }
.pipe-tabs { flex: none; height: 22px; padding-left: 42px; display: grid; grid-template-columns: 54px 50px 62px 48px 65px 52px 1fr; }
.pipe-tabs .on { background: #e9f2fd; border: 1px solid #8fb3e0; border-bottom: 0; border-radius: 3px 3px 0 0; }
.tab-more { justify-self: end; align-self: center; margin-right: 2px; }
.pipe-ribbon { flex: none; height: 89px; margin: 0 2px; border: 1px solid #8fb3e0; border-bottom: 2px solid #a6e6ee; border-radius: 3px; background: linear-gradient(#dbe6f4 18%, #c9d9ed 19%, #dde9f7 75%); }
.pipe-buttons { height: 70px; padding: 6px 0 0 3px; display: grid; grid-template-columns: 44px 42px 42px 42px 42px 43px 46px 43px 44px; }
.pipe-buttons button { display: flex; flex-direction: column; align-items: center; gap: 3px; white-space: normal; font-size: 11px; }
.pipe-buttons svg { width: 32px; height: 32px; }
.pipe-ribbon p { padding-left: 168px; height: 16px; line-height: 16px; background: #bfd5ef; color: #3e68ad; }
.band { flex: none; height: 26px; display: flex; align-items: center; gap: 3px; padding-left: 12px; border-bottom: 2px solid #6f9ad2; background: linear-gradient(#e3efff, #b9d4f8); }
.band svg { width: 19px; height: 19px; }
.band.short { width: 242px; margin-top: 2px; border-bottom: 1px solid #6f9ad2; }
.canvas-wrap { flex: 1; min-height: 0; display: grid; grid-template-columns: 1fr 21px; grid-template-rows: 1fr 23px; background: #fff; border-bottom: 1px solid #555; }
.canvas { border: 2px solid #ff0; border-left-width: 3px; background: #fff; display: flex; align-items: flex-end; padding: 0 0 54px 23px; }
.axes { width: 100px; height: 70px; font: 11px "Liberation Sans", sans-serif; }
.vbar { background: #f0f0f0; display: flex; flex-direction: column; justify-content: flex-end; align-items: center; border-right: 2px solid #777; }
.vbar i { width: 100%; height: 17px; background: #cdcdcd; margin-bottom: 76px; }
.vbar svg { width: 8px; height: 9px; transform: rotate(90deg); margin-bottom: 4px; }
.hbar { display: flex; align-items: center; background: #f0f0f0; padding: 0 6px; }
.hbar svg { width: 7px; height: 9px; color: #444; }
.hbar i { margin: 0 6px 0 auto; width: 17px; height: 16px; background: #cdcdcd; }
.back { transform: scaleX(-1); }
.pipe-status { flex: none; height: 24px; display: grid; grid-template-columns: 1fr 78px 61px 41px 101px 100px; border-top: 2px solid #4a72b0; background: linear-gradient(#b9d4f5, #83a9e4 45%, #8fb3ea); }
.pipe-status span { padding: 4px 9px; border-left: 1px solid #dce9fb; }
.pipe-status .cmd { background: linear-gradient(#d9e8fb, #b0cdf3 45%, #cadef8); font: 10px/14px "DejaVu Sans Mono", monospace; }

/* floating windows */
.window { position: absolute; background: #fff; border: 1px solid #9a9a9a; box-shadow: 0 4px 14px rgba(0, 0, 0, .35); }
.behind { left: 1500px; top: 173px; right: 14px; height: 68px; background: linear-gradient(#fff 44%, #f0f0f0 45%); }
.review { left: 114px; top: 624px; width: 1012px; height: 262px; display: flex; flex-direction: column; background: #f0f0f0; }
.review h2 { height: 37px; padding: 0 9px; display: flex; align-items: center; gap: 7px; background: #fff; color: #8c8c8c; font-size: 14px; }
.review h2 svg { width: 18px; }
.review-body { flex: 1; margin: 14px 7px 7px 14px; display: flex; flex-direction: column; border: 1px solid #555; font-family: "Liberation Sans", sans-serif; }
.review-main { flex: 1; display: flex; justify-content: space-between; }
.pipes { align-self: flex-start; border-collapse: collapse; table-layout: fixed; width: 270px; font-size: 11px; line-height: 12px; }
.pipes thead th { height: 58px; border: 1px solid #111; border-width: 0 2px 2px 0; color: #000; white-space: nowrap; }
.pipes th:first-child { width: 22px; padding: 0; }
.pipes th:nth-child(2), .pipes th:nth-child(3) { width: 47px; }
.pipes th:nth-child(4) { width: 86px; }
.pipes td, .pipes tbody th { height: 16px; padding: 0 2px; border: 1px solid #777; background: #c0c0c0; }
.pipes tbody th { background: #f0f0f0; border-bottom-color: #111; }
.pipes td.w { background: #fff; }
.pipes svg { width: 7px; height: 9px; }
.review-scroll { width: 22px; display: flex; flex-direction: column; }
.review-scroll i { flex: 1; border: 2px outset #eee; }
.review-scroll button, .step { width: 21px; height: 20px; border: 2px outset #eee; flex: none; }
.review-scroll svg, .step svg { width: 8px; height: 8px; display: block; margin: auto; }
.review-tabs { height: 22px; display: flex; overflow: hidden; }
.dim { opacity: .55; }
.tab { font-size: 16px; padding: 0 8px 0 9px; border-top: 1px solid #111; position: relative; color: #000; }
.tab::after { content: ""; position: absolute; right: 0; top: 0; width: 1px; height: 22px; background: #111; transform: skewX(-14deg); }
.tab.on { background: #fff; font-weight: bold; border-top-color: #fff; padding-left: 11px; }
.tab.last { flex: 1; text-align: left; overflow: hidden; }
.track { width: 52px; border: 2px outset #eee; flex: none; }
.corner { width: 21px; flex: none; }

/* Explorer */
.explorer { left: 373px; top: 0; right: 28px; height: 816px; display: flex; flex-direction: column; }
.ex-title { flex: none; height: 37px; display: flex; align-items: center; gap: 12px; padding-left: 10px; color: #999; font-size: 15px; }
.ex-title > svg { width: 14px; height: 18px; }
.ex-title > i { width: 1px; height: 16px; background: #999; }
.ex-title > .caret { width: 8px; height: 8px; }
.win-buttons { margin-left: auto; display: flex; color: #777; }
.win-buttons button { width: 58px; }
.win-buttons svg { width: 12px; height: 12px; }
.ex-tabs { flex: none; height: 29px; display: grid; grid-template-columns: 70px 69px 69px 62px; border-bottom: 1px solid #ddd; color: #333; }
.ex-tabs .file { background: #0064b4; color: #fff; }
.ex-address { flex: none; height: 43px; display: grid; grid-template-columns: 121px 1fr 254px; align-items: center; gap: 12px; }
.arrows { display: flex; align-items: center; padding-left: 15px; justify-content: space-between; }
.arrows .mini { width: 8px; height: 6px; }
.path { height: 28px; border: 1px solid #d9d9d9; display: grid; grid-template-columns: 23px 19px 87px 128px 254px 124px 65px 118px 1fr 20px 22px; align-items: center; padding-left: 5px; color: #111; }
.path b { font-weight: normal; }
.path > svg:first-child { width: 14px; height: 18px; }
.path a { display: flex; align-items: center; justify-content: space-between; padding-right: 11px; white-space: nowrap; }
.path a svg { width: 7px; height: 9px; color: #666; }
.path .open { width: 10px; height: 7px; }
.path button { border-left: 1px solid #d9d9d9; height: 26px; display: grid; place-items: center; }
.path button svg { width: 15px; height: 16px; }
.ex-address input { height: 28px; border: 1px solid #d9d9d9; padding-left: 9px; }
.ex-address input::placeholder { color: #777; }
.ex-main { flex: 1; min-height: 0; display: flex; }
.nav { width: 195px; padding-top: 21px; margin-right: 22px; overflow: hidden; }
.nav li { height: 30px; display: flex; align-items: center; gap: 7px; padding-left: 41px; white-space: nowrap; color: #111; }
.nav li.root { padding-left: 31px; }
.nav li.gap { margin-top: 10px; }
.nav li svg { width: 17px; height: 17px; }
.nav li .pin { width: 15px; height: 15px; margin: 0 3px 0 auto; }
.nav .on { background: #d9d9d9; }
.files { width: 718px; align-self: flex-start; table-layout: fixed; border-spacing: 0; color: #666; }
.files th { height: 34px; text-align: left; font-weight: normal; color: #41597a; padding: 0 8px; border-right: 1px solid #e2e2e2; position: relative; }
.files th:nth-child(1) { width: 321px; padding-left: 4px; }
.files th:nth-child(2), .files th:nth-child(3) { width: 150px; }
.files th:nth-child(4) { width: 97px; }
.sort { position: absolute; left: 154px; top: 0; width: 10px; height: 6px; }
.files thead::after { content: ""; display: block; height: 8px; }
.files td { height: 28px; padding: 0 8px; background: #d9d9d9; white-space: nowrap; }
.files td:first-child { color: #111; padding-left: 4px; }
.files td svg { width: 20px; height: 20px; vertical-align: middle; margin-right: 6px; }
.files td:last-child { text-align: right; }
.ex-status { flex: none; height: 28px; padding-left: 17px; display: flex; align-items: center; gap: 26px; color: #1e3f6e; }
.views { margin-left: auto; display: flex; }
.views button { width: 28px; height: 28px; border: 1px solid transparent; margin-right: 4px; }
.views .on { background: #cce8f6; border-color: #2a9bd8; }
.views svg { width: 17px; vertical-align: middle; }
.recorder { position: absolute; right: 9px; top: 24px; width: 102px; height: 41px; border: 1px solid #aaa; border-radius: 3px; background: #f0f0f0; display: flex; align-items: center; justify-content: space-between; padding: 0 10px 0 3px; }
.recorder .logo { width: 32px; height: 32px; }
.recorder i { width: 1px; height: 34px; background: #aaa; }
.hint { position: absolute; right: 9px; top: 68px; width: 223px; height: 55px; border: 1px solid #666; background: #fff; padding: 3px; color: #000; font-size: 12px; white-space: nowrap; }
.hint p { padding: 0 3px; }
.hint i { display: block; height: 11px; border: 1px solid #bbb; background: #e6e6e6; }
.hint .end { text-align: right; margin-top: 1px; }

/* task bars */
.taskbar { flex: none; height: 50px; display: flex; background: linear-gradient(90deg, #1d2929, #1f2a2a 35%, #1a1d1e 55%, #1f1416 68%, #1f1618 82%, #1f2b2b); color: #fff; }
.taskbar button { width: 62px; border-bottom: 3px solid transparent; position: relative; }
.taskbar button svg { width: 30px; height: 30px; vertical-align: middle; }
.taskbar .run::after { content: ""; position: absolute; left: 5px; right: 5px; bottom: -3px; height: 3px; background: #76b9ed; }
.taskbar .on { background: #474b4b; }
.taskbar .on::after { left: 0; right: 0; }
.taskbar .start { width: 60px; }
.taskbar .start svg { width: 22px; height: 22px; }
.taskbar .view { width: 58px; margin-right: 6px; }
.taskbar .view svg { width: 22px; height: 22px; }
.search { width: 430px; background: #f2f2f2; display: flex; align-items: center; gap: 10px; padding: 0 19px 0 11px; color: #333; font-size: 17px; }
.search .ring { width: 33px; height: 33px; color: #111; }
.search input { flex: 1; }
.search input::placeholder { color: #444; }
.search .mic { width: 14px; height: 22px; }
.tray { margin-left: auto; display: flex; align-items: center; gap: 14px; padding-right: 30px; }
.tray svg { width: 19px; height: 19px; fill: none; stroke: #fff; stroke-width: 1.500; }
.tray .solid { fill: #fff; }
.tray time { text-align: center; line-height: 23px; margin: 0 14px 0 6px; }
.tray svg:last-child { width: 22px; height: 22px; }
.tray svg:first-child { margin-right: 8px; }
.taskbar.small { height: 40px; }
.small button, .small .view { width: 49px; margin: 0; border-bottom-width: 2px; }
.small .view { margin-right: 3px; }
.small button svg, .small .view svg { width: 24px; height: 24px; }
.small button:first-child svg, .small .cort svg, .small .view svg { width: 18px; height: 18px; }
.small .run::after { bottom: -2px; height: 2px; }
.small .tray { padding-right: 9px; }
.small .tray time { margin: 0; font-size: 11px; line-height: 18px; }

/* Excel */
.right { background: #e6e6e6; font-size: 12px; line-height: 16px; color: #444; }
.xl-title { flex: none; height: 34px; background: #217346; color: #fff; display: flex; align-items: center; padding-left: 23px; gap: 9px; position: relative; }
.faint { color: #5f9c7a; }
.toggle { border: 1px solid #5f9c7a; border-radius: 9px; width: 38px; line-height: 13px; padding-left: 17px; font-size: 10px; margin-right: 6px; position: relative; }
.toggle::before { content: ""; position: absolute; left: 5px; top: 3px; width: 7px; height: 7px; border-radius: 50%; background: #5f9c7a; }
.xl-title h1 { flex: 1; text-align: center; font-size: 12px; padding-left: 86px; }
.circuit { position: absolute; right: 0; top: 0; width: 500px; height: 34px; }
.user, .xl-win { position: relative; }
.xl-win { display: flex; }
.xl-win button { width: 46px; }
.xl-win svg { width: 11px; height: 11px; }
.xl-tabs { flex: none; height: 34px; padding-left: 1px; background: #f3f2f1; display: grid; grid-template-columns: 51px 72px 52px 113px 92px 46px 58px 55px 56px 220px 1fr; align-items: start; font-size: 13px; }
.xl-tabs > button { height: 28px; padding-top: 3px; }
.xl-tabs .on { font-weight: 600; justify-self: center; border-bottom: 3px solid #217346; }
.xl-tabs label { display: flex; align-items: center; gap: 10px; height: 32px; padding-left: 20px; }
.xl-tabs label input { flex: 1; font-size: 12px; }
.xl-tabs input::placeholder { color: #555; opacity: 1; }
.share { justify-self: end; display: flex; gap: 9px; padding: 3px 12px 0 0; }
.share button { height: 24px; border: 1px solid #e1dfdd; background: #fff; border-radius: 2px; padding: 0 8px 0 6px; display: flex; align-items: center; gap: 4px; color: #217346; font-weight: 600; font-size: 12px; }
.share svg { width: 13px; height: 13px; }
.xl-ribbon { flex: none; height: 92px; background: #f3f2f1; display: grid; grid-template-columns: 165px 214px 271px 147px 695px 143px 194px 1fr; }
.grp { display: flex; flex-direction: column; border-right: 1px solid #c8c6c4; margin-bottom: 4px; min-width: 0; }
.grp p { height: 16px; text-align: center; position: relative; font-size: 11px; }
.grp p svg { position: absolute; right: 4px; top: 4px; width: 8px; height: 8px; }
.body { flex: 1; min-height: 0; display: flex; }
.big { display: flex; flex-direction: column; align-items: center; line-height: 15px; gap: 1px; padding-top: 4px; }
.big > svg:first-child { width: 28px; height: 28px; margin-bottom: 2px; }
.big .tiny { margin: 4px 2px; }
.big span .tiny { margin: 1px 2px; }
.off { color: #aaa; }
.clip .big { width: 42px; padding-left: 14px; }
.stack { display: flex; flex-direction: column; justify-content: space-around; align-items: flex-start; font-size: 11px; }
.clip .stack { padding-left: 11px; }
.stack button { display: flex; align-items: center; gap: 3px; height: 22px; }
.stack .tiny { margin-left: 6px; }
.rows { flex-direction: column; gap: 9px; padding-top: 8px; }
.line { height: 24px; display: flex; align-items: center; }
.bar { width: 1px; height: 22px; background: #c8c6c4; }
select { height: 22px; border: 1px solid #c8c6c4; background: #fff; padding: 0 2px; font-size: 12px; }
.font .line { padding-left: 8px; }
.font select { width: 105px; }
.font .size { width: 49px; }
.big-a { font-size: 15px; padding-left: 7px; }
.small-a { font-size: 13px; padding-left: 8px; }
sup { color: #1d7fc9; font-size: 9px; line-height: 0; }
.font .tools { justify-content: space-between; padding: 0 10px 0 14px; font-size: 15px; }
.it { font-family: "Liberation Serif", serif; }
.fc { border-bottom: 4px solid #f00; line-height: 15px; width: 16px; }
.tri { display: flex; width: 77px; padding-left: 7px; }
.tri svg { width: 22px; height: 22px; padding: 4px; }
.tri .sel { background: #c6c6c6; }
.pair { width: 53px; display: flex; align-items: center; justify-content: space-between; padding: 0 8px 0 6px; }
.wide { display: flex; align-items: center; gap: 3px; padding: 0 12px 0 6px; font-size: 11px; }
.number .line { padding-left: 8px; }
.number select { width: 131px; }
.number .sym { justify-content: space-between; padding: 0 8px 0 12px; font-size: 18px; }
.styles .body { padding-left: 8px; }
.styles .big { width: 69px; font-size: 11px; }
.styles .big + .big { width: 58px; }
.gallery { margin: 6px 9px 0 3px; height: 62px; flex: 1; border: 1px solid #c8c6c4; background: #fff; display: flex; justify-content: space-between; }
.swatches { display: grid; grid-template-columns: repeat(5, 100px); grid-auto-rows: 22px; gap: 6px; padding: 5px 4px; font-size: 12px; color: #000; }
.swatches button { text-align: left; padding-left: 4px; }
.swatches .s-normal { outline: 3px solid #c6c6c6; }
.swatches .s-bad { background: #ffc7ce; color: #9c0006; }
.swatches .s-good { background: #c6efce; color: #006100; }
.swatches .s-neutral { background: #ffeb9c; color: #9c5700; }
.swatches .s-calc { background: #f2f2f2; color: #fa7d00; font-weight: bold; border: 1px solid #7f7f7f; }
.swatches .s-check { background: #a5a5a5; color: #fff; font-weight: bold; border: 3px double #3f3f3f; padding-left: 2px; }
.swatches .s-expl { color: #7f7f7f; font-style: italic; }
.swatches .s-input { background: #ffcc99; color: #3f3f76; border: 1px solid #7f7f7f; }
.swatches .s-link { color: #fa7d00; border-bottom: 3px double #ff8001; }
.gscroll { width: 16px; display: flex; flex-direction: column; }
.gscroll button { flex: 1; border: 1px solid #c8c6c4; line-height: 8px; }
.cells .body { padding-left: 8px; }
.cells .big { width: 42px; font-size: 11px; }
.edit .stack { width: 101px; padding-left: 9px; }
.sigma { font-size: 18px; width: 16px; }
.edit .big { width: 44px; font-size: 11px; }
.collapse { align-self: end; justify-self: end; margin: 0 9px 6px 0; }
.collapse svg { width: 10px; height: 6px; }
.xl-formula { flex: none; height: 47px; display: grid; grid-template-columns: 102px 30px 110px 1fr; padding: 11px 5px 10px 5px; background: linear-gradient(#d2d2d2, #e6e6e6 5px); }
.namebox, .fxbox, .xl-formula > input { height: 26px; border: 1px solid #c8c8c8; background: #fdfdfd; display: flex; align-items: center; }
.namebox { justify-content: space-between; padding: 0 8px 0 6px; }
.dots { text-align: center; color: #888; line-height: 26px; }
.fxbox { justify-content: space-around; color: #bbb; font-size: 14px; }
.fx { font: italic bold 15px "Liberation Serif", serif; color: #555; }
.xl-formula > input { margin-left: 3px; padding-left: 11px; }

/* worksheet */
.sheet-area { flex: 1; min-height: 0; display: flex; justify-content: space-between; }
.sheet-clip { width: 1899px; overflow: hidden; border-right: 1px solid #999; }
.sheet { table-layout: fixed; width: 1898px; border-spacing: 0; background: #fff; font: 11px/11px "Open Sans", "Noto Sans", sans-serif; color: #000; }
.sheet th, .sheet td { padding: 0 2px 0 3px; border: 0 solid #d4d4d4; border-width: 0 1px 1px 0; overflow: hidden; white-space: nowrap; vertical-align: bottom; text-align: left; }
.sheet th { background: #e6e6e6; text-align: center; font-weight: normal; font-size: 10px; color: #222; border-color: #b5b5b5; padding: 0; }
.sheet thead tr { height: 13px; }
.sheet thead th { border-bottom-color: #888; }
.sheet thead .cur { background: #d2d2d2; color: #217346; border-bottom: 2px solid #217346; }
.sheet tbody .cur { background: #d2d2d2; color: #217346; border-right-color: #217346; }
.mid, .head, .sheet .small { height: 15px; }
.low { height: 13px; }
.tall { height: 24px; }
.sheet .deep { height: 20px; }
.sheet .big { display: table-row; height: 20px; font: 14px/17px Lato, "Open Sans", sans-serif; }
.head td { font-family: Lato, sans-serif; font-weight: bold; }
.sheet .edge td { border-bottom-color: #000; }
.sheet td[class^="f-"] { border-color: #000; }
.sheet .f-h { background: #1f4e78; color: #fff; }
.sheet .f-s { background: #d6dce4; }
.sheet .f-b, .sheet .f-v { background: #d9e1f2; }
.sheet .f-g { background: #f2f2f2; }
.sheet .f-w { background: #fff; }
.sheet .f-v { color: #0070c0; font-family: "Liberation Serif", serif; font-weight: bold; font-size: 12px; vertical-align: middle; }
.sheet .f-e { background: #e2efda; color: #375623; font: bold 11px/12px "Noto Sans", sans-serif; }
.sheet .f-x { outline: 2px solid #217346; outline-offset: -1px; background: #fff; }
.sheet .num { text-align: right; }
.sheet .label { background: #f4b084; text-align: center; font: bold 17px/22px Lato, sans-serif; outline: 1px solid #000; vertical-align: middle; }
.sheet-scroll { width: 18px; margin-right: 3px; display: flex; flex-direction: column; align-items: center; background: #dadada; }
.sheet-scroll button, .hscroll button { width: 16px; height: 14px; border: 1px solid #aaa; background: #fff; line-height: 8px; flex: none; }
.sheet-scroll i { margin: auto 0 80px; width: 16px; height: 71px; background: #fff; border: 1px solid #aaa; }
.sheet-tabs { flex: none; height: 28px; border-top: 1px solid #999; border-bottom: 1px solid #c6c6c6; display: grid; grid-template-columns: 100px 84px 46px 60px 54px 58px 59px 108px 60px 75px 62px 58px 156px 53px 50px 28px 28px 32px 1fr; align-items: center; }
.sheet-tabs > button { height: 20px; border-right: 1px solid #aaa; font-size: 12px; }
.sheet-tabs > .on { height: 25px; align-self: start; background: #fff; color: #217346; font-weight: bold; border: 0; border-bottom: 2px solid #217346; }
.sheet-tabs > button:nth-of-type(14) { border: 0; }
.steps { display: flex; gap: 22px; padding-left: 26px; fill: #217346; }
.steps svg, .hscroll svg { width: 6px; height: 8px; }
.more { color: #217346; font-weight: bold; text-align: center; }
.plus { width: 17px; height: 17px; border: 1px solid #777; border-radius: 50%; line-height: 14px; text-align: center; justify-self: center; }
.hscroll { margin-right: 18px; display: flex; align-items: center; background: #dadada; }
.hscroll i { width: 294px; height: 14px; margin-left: 134px; border: 1px solid #aaa; background: #f0f0f0; }
.hscroll .bottom { margin-left: auto; }
.xl-status { flex: none; height: 22px; background: #f3f2f1; display: flex; justify-content: flex-end; font-size: 12px; padding-right: 7px; }
.display { display: flex; align-items: center; gap: 3px; margin-right: 19px; font-size: 11px; }
.xl-status button { width: 38px; }
.xl-status button.on { background: #c6c6c6; }
.xl-status button svg { width: 14px; height: 13px; vertical-align: middle; }
.zoom { display: flex; align-items: center; gap: 3px; padding-left: 5px; font-size: 11px; }
.zoom input { width: 102px; height: 16px; appearance: none; background: linear-gradient(#999, #999) center / 100% 1px no-repeat; }
.zoom input::-webkit-slider-thumb { appearance: none; width: 5px; height: 12px; background: #666; }
.zoom span { margin-left: 6px; }
.cursor { position: absolute; left: 1536px; top: 998px; width: 14px; height: 24px; }
```
